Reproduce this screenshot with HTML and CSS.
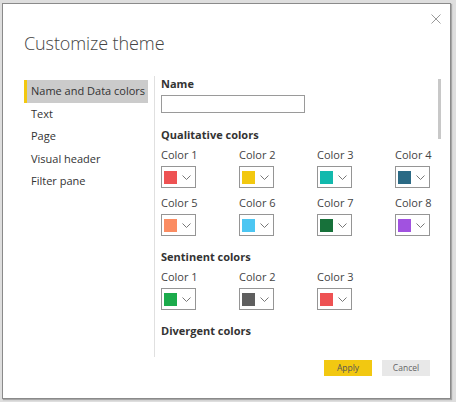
FILE: index.html
```html
<!DOCTYPE html>
<html lang="en">
<head>
<meta charset="utf-8">
<title>Customize theme</title>
<link rel="stylesheet" href="styles.css">
</head>
<body>
<div class="dialog">
  <div class="topbar">
    <svg class="close" width="10" height="10" viewBox="0 0 10 10"><path d="M0.5 0.5 L9.5 9.5 M9.5 0.5 L0.5 9.5" stroke="#9a9a9a" stroke-width="1" fill="none"/></svg>
  </div>
  <h1 class="title">Customize theme</h1>
  <div class="body">
    <nav class="nav">
      <div class="nav-item active">Name and Data colors</div>
      <div class="nav-item">Text</div>
      <div class="nav-item">Page</div>
      <div class="nav-item">Visual header</div>
      <div class="nav-item">Filter pane</div>
    </nav>
    <div class="content">
      <div class="panel">
        <div class="label-bold">Name</div>
        <div class="input"></div>

        <div class="section-title first">Qualitative colors</div>
        <div class="grid">
          <div class="cell"><div class="clabel">Color 1</div><div class="picker"><span class="swatch" style="background:#ee5253"></span><svg class="chev" width="9" height="5" viewBox="0 0 9 5"><path d="M0.5 0.5 L4.5 4.5 L8.5 0.5" stroke="#777" fill="none"/></svg></div></div>
          <div class="cell"><div class="clabel">Color 2</div><div class="picker"><span class="swatch" style="background:#f2c80f"></span><svg class="chev" width="9" height="5" viewBox="0 0 9 5"><path d="M0.5 0.5 L4.5 4.5 L8.5 0.5" stroke="#777" fill="none"/></svg></div></div>
          <div class="cell"><div class="clabel">Color 3</div><div class="picker"><span class="swatch" style="background:#12b9ad"></span><svg class="chev" width="9" height="5" viewBox="0 0 9 5"><path d="M0.5 0.5 L4.5 4.5 L8.5 0.5" stroke="#777" fill="none"/></svg></div></div>
          <div class="cell"><div class="clabel">Color 4</div><div class="picker"><span class="swatch" style="background:#2b6a85"></span><svg class="chev" width="9" height="5" viewBox="0 0 9 5"><path d="M0.5 0.5 L4.5 4.5 L8.5 0.5" stroke="#777" fill="none"/></svg></div></div>
          <div class="cell"><div class="clabel">Color 5</div><div class="picker"><span class="swatch" style="background:#fb8c62"></span><svg class="chev" width="9" height="5" viewBox="0 0 9 5"><path d="M0.5 0.5 L4.5 4.5 L8.5 0.5" stroke="#777" fill="none"/></svg></div></div>
          <div class="cell"><div class="clabel">Color 6</div><div class="picker"><span class="swatch" style="background:#4cc6f2"></span><svg class="chev" width="9" height="5" viewBox="0 0 9 5"><path d="M0.5 0.5 L4.5 4.5 L8.5 0.5" stroke="#777" fill="none"/></svg></div></div>
          <div class="cell"><div class="clabel">Color 7</div><div class="picker"><span class="swatch" style="background:#17713a"></span><svg class="chev" width="9" height="5" viewBox="0 0 9 5"><path d="M0.5 0.5 L4.5 4.5 L8.5 0.5" stroke="#777" fill="none"/></svg></div></div>
          <div class="cell"><div class="clabel">Color 8</div><div class="picker"><span class="swatch" style="background:#a152e0"></span><svg class="chev" width="9" height="5" viewBox="0 0 9 5"><path d="M0.5 0.5 L4.5 4.5 L8.5 0.5" stroke="#777" fill="none"/></svg></div></div>
        </div>

        <div class="section-title">Sentinent colors</div>
        <div class="grid">
          <div class="cell"><div class="clabel">Color 1</div><div class="picker"><span class="swatch" style="background:#1bab4b"></span><svg class="chev" width="9" height="5" viewBox="0 0 9 5"><path d="M0.5 0.5 L4.5 4.5 L8.5 0.5" stroke="#777" fill="none"/></svg></div></div>
          <div class="cell"><div class="clabel">Color 2</div><div class="picker"><span class="swatch" style="background:#5f5f5f"></span><svg class="chev" width="9" height="5" viewBox="0 0 9 5"><path d="M0.5 0.5 L4.5 4.5 L8.5 0.5" stroke="#777" fill="none"/></svg></div></div>
          <div class="cell"><div class="clabel">Color 3</div><div class="picker"><span class="swatch" style="background:#ee5253"></span><svg class="chev" width="9" height="5" viewBox="0 0 9 5"><path d="M0.5 0.5 L4.5 4.5 L8.5 0.5" stroke="#777" fill="none"/></svg></div></div>
        </div>

        <div class="section-title">Divergent colors</div>
      </div>
      <div class="scrolltrack"><div class="thumb"></div></div>
    </div>
  </div>
  <div class="footer">
    <button class="btn apply">Apply</button>
    <button class="btn cancel">Cancel</button>
  </div>
</div>
</body>
</html>
```
FILE: styles.css
```css
* { box-sizing: border-box; }
html, body { margin: 0; padding: 0; }
body {
  background: #dedede;
  width: 456px;
  height: 402px;
  overflow: hidden;
  font-family: "Open Sans", "Noto Sans", sans-serif;
  color: #333;
}
.dialog {
  margin: 3px 0 0 2px;
  width: 449px;
  height: 396px;
  background: #fff;
  border: 1px solid #8a8a8a;
  box-shadow: 1px 1px 1px rgba(0,0,0,0.25);
  display: flex;
  flex-direction: column;
}
.topbar {
  height: 20px;
  padding: 10px 9px 0 0;
  display: flex;
  justify-content: flex-end;
}
.close { display: block; }
.title {
  margin: 7px 0 0 21px;
  font-size: 18px;
  line-height: 24px;
  font-weight: 300;
  letter-spacing: -0.1px;
  color: #444;
}
.body {
  margin-top: 21px;
  height: 281px;
  display: flex;
}
.nav {
  width: 124px;
  margin-left: 21px;
  margin-right: 6px;
  padding-top: 4px;
}
.nav-item {
  height: 22.5px;
  line-height: 22.5px;
  font-size: 11px;
  padding-left: 7px;
  color: #333;
  white-space: nowrap;
}
.nav-item.active {
  background: #cbcbcb;
  border-left: 3px solid #f2c811;
  padding-left: 4px;
}
.content {
  flex: 1;
  border-left: 1px solid #e0e0e0;
  padding-left: 6px;
  display: flex;
}
.panel { width: 277px; }
.label-bold, .section-title {
  font-size: 11px;
  line-height: 16px;
  font-weight: 700;
  color: #333;
}
.input {
  margin-top: 3px;
  width: 144px;
  height: 18px;
  border: 1px solid #9a9a9a;
}
.section-title { margin-top: 13px; }
.section-title.first { margin-top: 14px; }
.grid {
  margin-top: 4px;
  display: grid;
  grid-template-columns: repeat(4, 78px);
  row-gap: 7px;
}
.clabel {
  font-size: 11px;
  line-height: 16px;
  color: #444;
}
.picker {
  margin-top: 3px;
  width: 35px;
  height: 22px;
  border: 1px solid #959595;
  display: flex;
  align-items: center;
  padding-left: 2px;
}
.swatch {
  display: block;
  width: 13px;
  height: 13px;
}
.chev { margin-left: 5px; }
.scrolltrack {
  margin-left: 0;
  padding-top: 3px;
  width: 3px;
}
.thumb {
  width: 3px;
  height: 60px;
  background: #c8c8c8;
}
.footer {
  margin-top: 3px;
  padding-right: 20px;
  display: flex;
  justify-content: flex-end;
  gap: 10px;
}
.btn {
  width: 48px;
  height: 16px;
  border: none;
  padding: 0;
  font-family: "Open Sans", "Noto Sans", sans-serif;
  font-size: 8.5px;
  line-height: 16px;
}
.apply { background: #f2c811; color: #555; }
.cancel { background: #e8e8e8; color: #666; }
```
